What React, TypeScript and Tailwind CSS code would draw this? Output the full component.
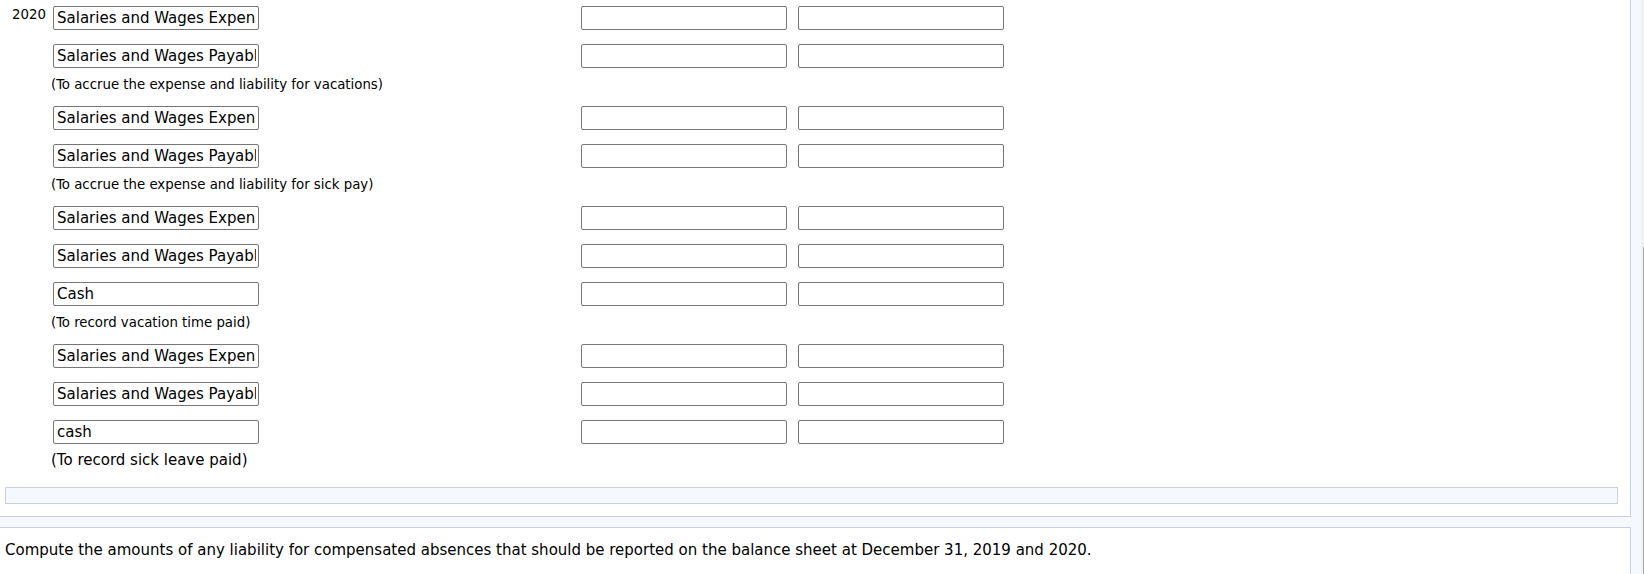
import React from 'react';

type Row =
  | { kind: 'entry'; account: string; date?: string; tight?: boolean }
  | { kind: 'note'; text: string; verdana?: boolean };

const rows: Row[] = [
  { kind: 'entry', date: '2020', account: 'Salaries and Wages Expense' },
  { kind: 'entry', account: 'Salaries and Wages Payable', tight: true },
  { kind: 'note', text: '(To accrue the expense and liability for vacations)' },
  { kind: 'entry', account: 'Salaries and Wages Expense' },
  { kind: 'entry', account: 'Salaries and Wages Payable', tight: true },
  { kind: 'note', text: '(To accrue the expense and liability for sick pay)' },
  { kind: 'entry', account: 'Salaries and Wages Expense' },
  { kind: 'entry', account: 'Salaries and Wages Payable' },
  { kind: 'entry', account: 'Cash', tight: true },
  { kind: 'note', text: '(To record vacation time paid)' },
  { kind: 'entry', account: 'Salaries and Wages Expense' },
  { kind: 'entry', account: 'Salaries and Wages Payable' },
  { kind: 'entry', account: 'cash', tight: true },
  { kind: 'note', text: '(To record sick leave paid)', verdana: true },
];

const verdana = "font-['DejaVu_Sans',Verdana,sans-serif] text-[15px]";
const tahoma = "font-['DejaVu_Sans_Condensed',Tahoma,sans-serif] text-[14.8px]";

const Field = ({ value, width }: { value?: string; width: string }) => (
  <input
    readOnly
    value={value ?? ''}
    className={`${width} h-[24px] border border-[#767676] rounded-[2px] bg-white pl-[3px] pr-[2px] text-black outline-none ${verdana}`}
  />
);

const App: React.FC = () => {
  return (
    <div className="flex w-[1644px] h-[574px] overflow-hidden bg-[#f5f8fc]">
      <div className="flex flex-col w-[1641px]">
        {/* journal panel */}
        <div className="w-[1631px] bg-white border-r border-b border-[#c8d1de] pt-[6px]">
          {rows.map((r, i) =>
            r.kind === 'entry' ? (
              <div key={i} className={`flex items-start ${r.tight ? 'mb-[4px]' : 'mb-[14px]'}`}>
                <div className={`w-[53px] pl-[12px] leading-[16px] text-black ${tahoma}`}>
                  {r.date}
                </div>
                <Field value={r.account} width="w-[206px]" />
                <div className="w-[322px]" />
                <Field width="w-[206px]" />
                <div className="w-[11px]" />
                <Field width="w-[206px]" />
              </div>
            ) : (
              <div
                key={i}
                className={`pl-[51px] h-[24px] leading-[24px] mb-[10px] text-black ${r.verdana ? verdana : tahoma}`}
              >
                {r.text}
              </div>
            )
          )}
          <div className="ml-[5px] mt-[15px] mb-[12px] w-[1613px] h-[17px] bg-[#f5f8fc] border border-[#c8d1de]" />
        </div>

        {/* question panel */}
        <div className="mt-[10px] w-[1631px] flex-1 bg-white border-t border-r border-[#c8d1de] pl-[5px] pt-[13px]">
          <p className={`leading-[18px] text-black ${verdana}`}>
            Compute the amounts of any liability for compensated absences that should be reported on the balance sheet at December 31, 2019 and 2020.
          </p>
        </div>
      </div>

      {/* scrollbar sliver */}
      <div className="w-[3px] bg-[#f1f1f1] pt-[247px]">
        <div className="ml-[2px] w-[1px] h-full bg-[#a8a8a8]" />
      </div>
    </div>
  );
};

export default App;
